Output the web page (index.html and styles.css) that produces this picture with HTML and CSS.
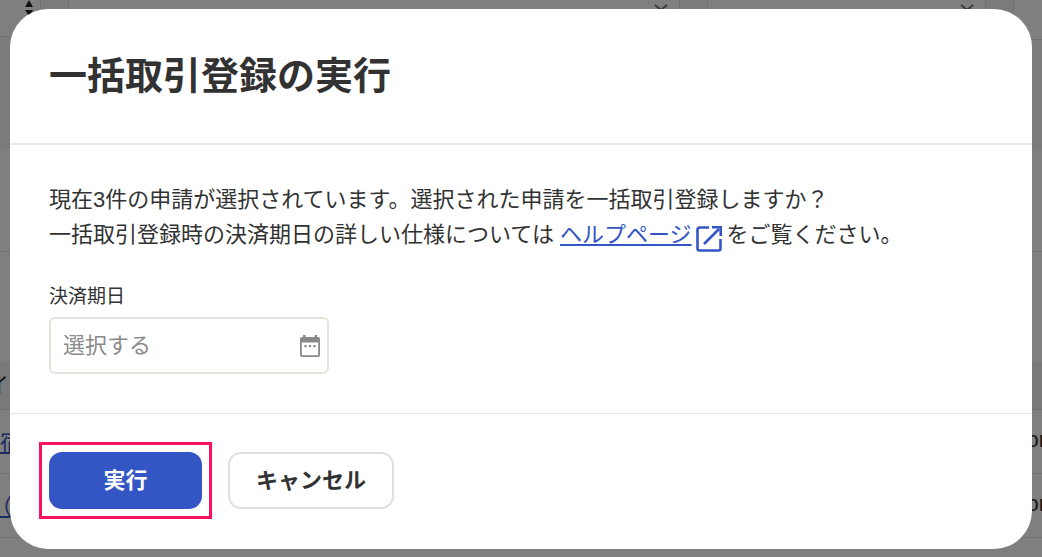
FILE: index.html
```html
<!DOCTYPE html>
<html lang="ja">
<head>
    <meta charset="UTF-8">
    <meta name="viewport" content="width=device-width, initial-scale=1.0">
    <title>一括取引登録の実行</title>
    <link rel="stylesheet" href="styles.css">
</head>
<body>
    <div class="page" inert>
        <div class="filters">
            <div class="filter filter-sort">
                <svg width="8" height="16" viewBox="0 0 8 16"><path d="M4 0l4 7H0zM0 10h8l-4 6z" fill="#222"/></svg>
            </div>
            <div class="filter filter-wide">
                <svg width="14" height="8" viewBox="0 0 14 8"><path d="M1 1l6 5 6-5" fill="none" stroke="#777" stroke-width="2"/></svg>
            </div>
            <div class="filter filter-mid">
                <svg width="14" height="8" viewBox="0 0 14 8"><path d="M1 1l6 5 6-5" fill="none" stroke="#777" stroke-width="2"/></svg>
            </div>
            <div class="filter filter-last"></div>
        </div>
        <div class="summary"></div>
        <div class="toolbar"></div>
        <table class="list">
            <tr><th>イ</th><th></th></tr>
            <tr><td><a href="#">新宿</a></td><td class="list-end">or</td></tr>
            <tr><td><a href="#">1（</a></td><td class="list-end">or</td></tr>
        </table>
    </div>

    <div class="overlay">
        <div class="modal" role="dialog" aria-modal="true" aria-labelledby="modalTitle">
            <div class="modal-header">
                <h1 class="modal-title" id="modalTitle">一括取引登録の実行</h1>
            </div>
            <div class="modal-body">
                <p class="message">現在3件の申請が選択されています。選択された申請を一括取引登録しますか？<br>一括取引登録時の決済期日の詳しい仕様については <a class="help-link" href="#"><span class="help-text">ヘルプページ</span><svg class="help-icon" width="26" height="26" viewBox="0 0 26 26" aria-hidden="true"><path d="M13 1.5H3.5a2 2 0 0 0-2 2v19a2 2 0 0 0 2 2h19a2 2 0 0 0 2-2V13M8 18L23 3" fill="none" stroke="currentColor" stroke-width="2.6"/><path d="M16 0h10v10h-2.6V2.6H16z" fill="currentColor"/></svg></a>をご覧ください。</p>
                <label class="date-label" for="dueDate">決済期日</label>
                <div class="date-field">
                    <input class="date-input" type="text" id="dueDate" placeholder="選択する">
                    <svg class="date-icon" width="20" height="22" viewBox="0 0 20 22" aria-hidden="true"><path d="M3 0h2.4v2h9.2V0H17v2h1a2 2 0 0 1 2 2v16a2 2 0 0 1-2 2H2a2 2 0 0 1-2-2V4a2 2 0 0 1 2-2h1zM1.8 7.4v12.8h16.4V7.4z" fill="#888" fill-rule="evenodd"/><path d="M4.4 10h2.2v2.2H4.4zM8.9 10h2.2v2.2H8.9zM13.4 10h2.2v2.2h-2.2z" fill="#888"/></svg>
                </div>
            </div>
            <div class="modal-footer">
                <div class="highlight">
                    <button class="btn btn-primary" type="button">実行</button>
                </div>
                <button class="btn btn-cancel" type="button">キャンセル</button>
            </div>
        </div>
    </div>
</body>
</html>
```
FILE: styles.css
```css
* {
    box-sizing: border-box;
}
body {
    margin: 0;
    min-height: 100vh;
    overflow: hidden;
    background: #fff;
    color: #323232;
    font-family: "Liberation Sans", "Noto Sans CJK JP", sans-serif;
    font-size: 22px;
}

/* list page behind the dialog */
.page {
    height: 100vh;
    overflow: hidden;
}
.filters {
    display: flex;
    gap: 27px;
    background: #f6f6f6;
}
.filter {
    display: flex;
    justify-content: flex-end;
    align-items: flex-start;
    height: 40px;
    padding: 4px 11px;
    background: #fff;
    border: 1px solid #e2dfd8;
    border-top: none;
}
.filter-sort {
    flex: none;
    width: 41px;
    height: 37px;
    padding: 0 7px;
    border-left: none;
}
.filter-wide {
    flex: 23;
}
.filter-mid {
    flex: 10;
}
.filter-last {
    flex: none;
    width: 29px;
    border-right: none;
}
.summary {
    height: 108px;
    background: #f6f6f6;
}
.toolbar {
    height: 213px;
    background: linear-gradient(#e6e6e6, #e6e6e6) 0 103px / 100% 1px no-repeat;
}
.list {
    width: calc(100% + 34px);
    margin: 0 -22px;
    border-collapse: collapse;
}
.list th {
    height: 48px;
    padding: 0 9px 4px;
    background: #f2f2f2;
    font-weight: normal;
    text-align: left;
}
.list td {
    height: 64px;
    padding: 0 0 2px;
    border-top: 1px solid #e2e2e2;
    border-bottom: 1px solid #e2e2e2;
}
.list a {
    color: #3455c4;
}
.list .list-end {
    padding-right: 8px;
    text-align: right;
}

.overlay {
    position: fixed;
    inset: 0;
    padding: 9px 10px;
    background: rgba(0, 0, 0, 0.5);
}
.modal {
    background: #fff;
    border-radius: 38px;
}
.modal-header {
    padding: 38px 39px;
    border-bottom: 2px solid #ebebeb;
}
.modal-title {
    margin: 0;
    font-size: 38px;
    line-height: 58px;
}
.modal-body {
    padding: 37px 39px 39px;
}
.message {
    margin: 0 0 32px;
    line-height: 35px;
}
.help-link {
    color: #3455c4;
    text-decoration: none;
}
.help-text {
    text-decoration: underline;
    text-underline-offset: 2px;
}
.help-icon {
    margin: 0 5px 0 4px;
    vertical-align: -10px;
}
.date-label {
    display: block;
    margin-bottom: 7px;
    font-size: 19px;
    line-height: 26px;
}
.date-field {
    display: flex;
    align-items: center;
    width: 280px;
    height: 57px;
    padding: 0 7px 0 12px;
    border: 2px solid #e6e3dc;
    border-radius: 6px;
}
.date-input {
    flex: 1;
    min-width: 0;
    padding: 0;
    border: none;
    outline: none;
    background: none;
    color: inherit;
    font: inherit;
}
.date-input::placeholder {
    color: #8a8a8a;
    opacity: 1;
}
.modal-footer {
    display: flex;
    align-items: center;
    gap: 16px;
    padding: 28px 29px 30px;
    border-top: 1px solid #e4e4e4;
}
.highlight {
    padding: 7px;
    border: 3px solid #fa125e;
}
.btn {
    display: block;
    height: 57px;
    padding: 0 26px 6px;
    border: 2px solid #dfdfdf;
    border-radius: 13px;
    background: #fff;
    color: #323232;
    font: inherit;
    font-weight: bold;
    cursor: pointer;
}
.btn-primary {
    min-width: 153px;
    border-color: #3455c4;
    background: #3455c4;
    color: #fff;
}
```
